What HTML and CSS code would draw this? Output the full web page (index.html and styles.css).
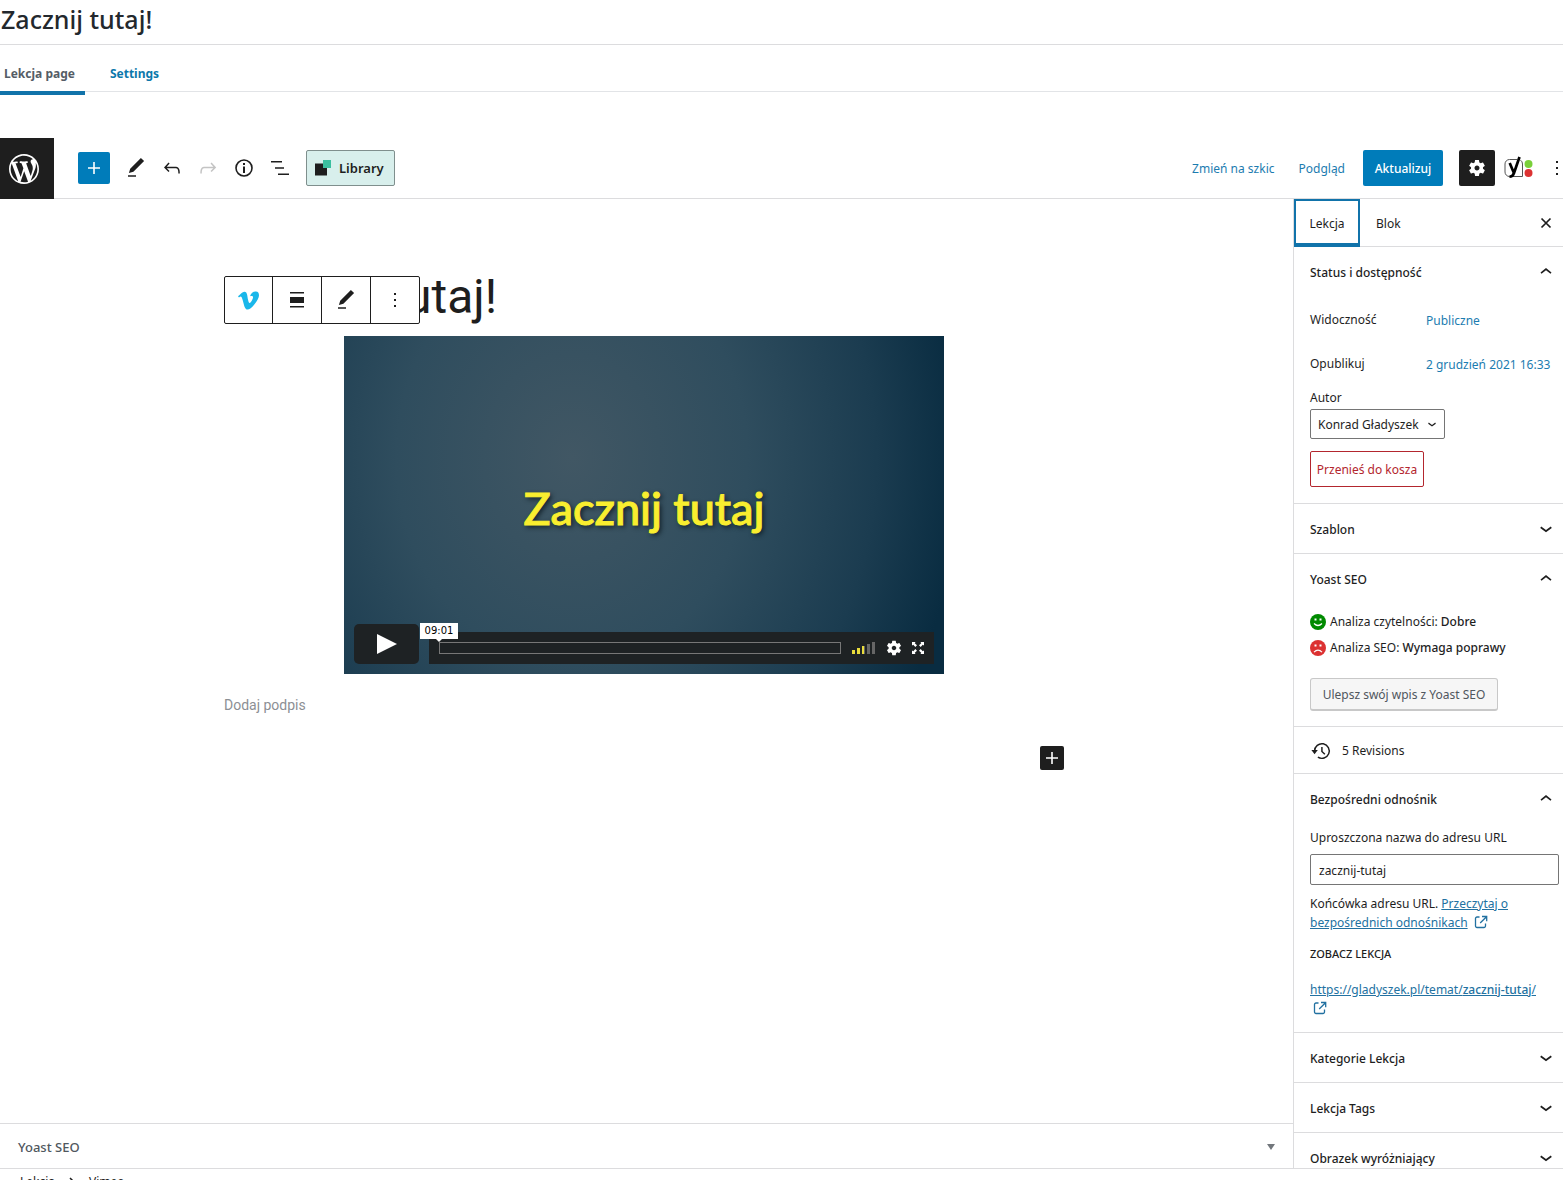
FILE: index.html
```html
<!DOCTYPE html>
<html lang="pl">
<head>
<meta charset="utf-8">
<title>Zacznij tutaj!</title>
<link rel="stylesheet" href="styles.css">
</head>
<body>
<svg class="sprite" aria-hidden="true">
  <symbol id="i-pencil" viewBox="0 0 24 24"><path d="M20.1 5.1L16.9 2 6.2 12.7l-1.3 4.4 4.5-1.3L20.1 5.1zM4 20.8h8v-1.5H4v1.5z"/></symbol>
  <symbol id="i-plus" viewBox="0 0 24 24"><path d="M18 11.2h-5.2V6h-1.6v5.2H6v1.6h5.2V18h1.6v-5.2H18z"/></symbol>
  <symbol id="i-dots" viewBox="0 0 24 24"><path d="M11 5h2v2h-2zM11 11h2v2h-2zM11 17h2v2h-2z"/></symbol>
  <symbol id="i-down" viewBox="0 0 24 24"><path d="M17.8 10L12 14.200 6.200 10l1-1.600L12 12l4.800-3.600 1 1.600z"/></symbol>
  <symbol id="i-up" viewBox="0 0 24 24"><path d="M6.500 11.400L12 7l5.500 4.400-1 1.300L12 9.200l-4.500 3.500-1-1.300z"/></symbol>
  <symbol id="i-cog" viewBox="0 0 24 24"><path d="M19.14 12.94c.04-.3.06-.61.06-.94 0-.32-.02-.64-.07-.94l2.03-1.58c.18-.14.23-.41.12-.61l-1.92-3.32c-.12-.22-.37-.29-.59-.22l-2.39.96c-.5-.38-1.03-.7-1.62-.94l-.36-2.54c-.04-.24-.24-.41-.48-.41h-3.84c-.24 0-.43.17-.47.41l-.36 2.54c-.59.24-1.13.57-1.62.94l-2.39-.96c-.22-.08-.47 0-.59.22L2.74 8.87c-.12.21-.08.47.12.61l2.03 1.58c-.05.3-.09.63-.09.94s.02.64.07.94l-2.03 1.58c-.18.14-.23.41-.12.61l1.92 3.32c.12.22.37.29.59.22l2.39-.96c.5.38 1.03.7 1.62.94l.36 2.54c.05.24.24.41.48.41h3.84c.24 0 .44-.17.47-.41l.36-2.54c.59-.24 1.13-.56 1.62-.94l2.39.96c.22.08.47 0 .59-.22l1.92-3.32c.12-.22.07-.47-.12-.61l-2.01-1.58zM12 15c-1.7 0-3-1.3-3-3s1.3-3 3-3 3 1.3 3 3-1.3 3-3 3z"/></symbol>
  <symbol id="i-external" viewBox="0 0 14 14"><path fill="none" stroke="currentColor" stroke-width="1.3" d="M5.500 2H3a1.500 1.500 0 0 0-1.500 1.500V11A1.500 1.500 0 0 0 3 12.500h7a1.500 1.500 0 0 0 1.500-1.500V8.500M8 1.500h4.700v4.700M12.500 1.700L6.200 8"/></symbol>
</svg>

<header class="page-head"><h1>Zacznij tutaj!</h1></header>
<nav class="page-tabs">
  <a href="#lekcja" class="page-tab is-active">Lekcja page</a>
  <a href="#settings" class="page-tab">Settings</a>
</nav>

<div class="editor">
  <div class="topbar">
    <a href="#wp" class="wp-logo" aria-label="WordPress">
      <svg viewBox="-2 -2 24 24"><path d="M20 10c0-5.51-4.49-10-10-10C4.480 0 0 4.490 0 10c0 5.520 4.480 10 10 10 5.510 0 10-4.480 10-10zM7.780 15.370L4.370 6.220c.55-.02 1.170-.08 1.170-.08.5-.06.44-1.130-.06-1.110 0 0-1.450.11-2.370.11-.18 0-.37 0-.58-.01C4.120 2.690 6.870 1.110 10 1.110c2.330 0 4.450.87 6.050 2.340-.68-.11-1.650.39-1.650 1.580 0 .74.45 1.360.9 2.100.35.61.55 1.360.55 2.460 0 1.490-1.400 5-1.400 5l-3.030-8.370c.54-.02.82-.17.82-.17.5-.05.44-1.250-.06-1.220 0 0-1.440.12-2.380.12-.87 0-2.330-.12-2.330-.12-.5-.03-.56 1.200-.06 1.220l.92.08 1.260 3.410zM17.410 10c.24-.64.74-1.870.43-4.250.7 1.290 1.050 2.710 1.050 4.250 0 3.290-1.730 6.240-4.400 7.780.97-2.590 1.940-5.200 2.920-7.780zM6.100 18.090C3.120 16.650 1.110 13.530 1.110 10c0-1.300.23-2.480.72-3.590C3.250 10.300 4.670 14.200 6.100 18.090zm4.030-6.630l2.580 6.980c-.86.29-1.760.45-2.710.45-.79 0-1.570-.11-2.290-.33.81-2.380 1.620-4.740 2.420-7.100z"/></svg>
    </a>
    <div class="tools">
      <button class="add-block" aria-label="Dodaj blok"><svg><use href="#i-plus"/></svg></button>
      <button class="tool" aria-label="Edytuj"><svg><use href="#i-pencil"/></svg></button>
      <button class="tool" aria-label="Cofnij"><svg viewBox="0 0 24 24"><path d="M18.300 11.700c-.6-.6-1.400-.9-2.300-.9H6.700l2.900-3.300-1.100-1-4.500 5L8.500 16l1-1-2.700-2.700H16c.5 0 .9.2 1.300.5 1 1 1 3.400 1 4.500v.3h1.500v-.2c0-1.500 0-4.300-1.500-5.700z"/></svg></button>
      <button class="tool is-muted" aria-label="Ponów" disabled><svg viewBox="0 0 24 24"><path d="M15.600 6.500l-1.100 1 2.900 3.300H8c-.9 0-1.700.3-2.300.9-1.400 1.500-1.400 4.200-1.400 5.600v.2h1.500v-.3c0-1.100 0-3.500 1-4.500.3-.3.7-.5 1.300-.5h9.200L14.500 15l1.100 1.100 4.600-4.600-4.600-5z"/></svg></button>
      <button class="tool" aria-label="Szczegóły"><svg viewBox="0 0 24 24"><circle cx="12" cy="12" r="8" fill="none" stroke="currentColor" stroke-width="1.600"/><path d="M11 7h2v2h-2zM11 10.500h2V17h-2z"/></svg></button>
      <button class="tool" aria-label="Widok listy"><svg viewBox="0 0 24 24"><path d="M3 5h11v1.500H3zM7 11.300h9v1.500H7zM10 17.500h11V19H10z"/></svg></button>
      <button class="library"><svg viewBox="0 0 16 16"><path d="M0 3.500h12v12H0z"/><path fill="#3bbf9f" d="M8 0h8v8H8z"/></svg>Library</button>
    </div>
    <div class="actions">
      <button class="link-btn">Zmień na szkic</button>
      <button class="link-btn">Podgląd</button>
      <button class="update">Aktualizuj</button>
      <button class="cog" aria-label="Ustawienia"><svg><use href="#i-cog"/></svg></button>
      <button class="yoast-btn" aria-label="Yoast SEO"><svg viewBox="0 0 30 24"><path fill="none" stroke="#555" d="M13 3.500H5.500A4.500 4.500 0 0 0 1 8v8a4.500 4.500 0 0 0 4.500 4.500H18.500V8a4.500 4.500 0 0 0-2-3.800"/><path fill="none" stroke="#000" stroke-width="2.700" d="M15.500 1L10 17q-1.300 3.700-4.500 3.700M5.700 7l4 9.500"/><circle cx="24.500" cy="8" r="4" fill="#7ad03a"/><circle cx="24.500" cy="17" r="4" fill="#dc3232"/></svg></button>
      <button class="more" aria-label="Opcje"><svg><use href="#i-dots"/></svg></button>
    </div>
  </div>

  <div class="body">
    <div class="main">
      <main class="canvas">
        <div class="column">
          <h2 class="post-title">Zacznij tutaj!</h2>
          <div class="block-toolbar">
            <button aria-label="Vimeo"><svg class="vimeo" viewBox="0 0 24 24"><path d="M23.980 6.420c-.1 2.340-1.740 5.540-4.900 9.600-3.260 4.250-6.020 6.380-8.290 6.380-1.400 0-2.570-1.300-3.550-3.880L5.320 11.400C4.600 8.820 3.840 7.520 3.010 7.520c-.18 0-.8.380-1.880 1.130L0 7.200a315 315 0 0 0 3.500-3.130C5.080 2.700 6.270 1.980 7.060 1.910c1.860-.18 3.010 1.100 3.440 3.840.47 2.950.8 4.790.97 5.500.54 2.450 1.130 3.680 1.780 3.680.5 0 1.260-.8 2.260-2.390 1-1.590 1.540-2.800 1.620-3.620.14-1.380-.4-2.070-1.620-2.070-.57 0-1.160.13-1.780.4 1.190-3.870 3.440-5.760 6.770-5.640 2.470.06 3.620 1.660 3.480 4.810z"/></svg></button>
            <button aria-label="Wyrównanie"><svg viewBox="0 0 24 24"><path d="M5 4h14v1.500H5zM5 9h14v6H5zM5 18h14v1.500H5z"/></svg></button>
            <button aria-label="Edytuj adres"><svg><use href="#i-pencil"/></svg></button>
            <button aria-label="Więcej"><svg><use href="#i-dots"/></svg></button>
          </div>
          <figure class="video">
            <div class="slide">Zacznij tutaj</div>
            <div class="player">
              <button class="play" aria-label="Odtwórz"><svg viewBox="0 0 20 20"><path d="M0 0l20 10L0 20z"/></svg></button>
              <div class="controls">
                <div class="track"><span class="time">09:01</span></div>
                <svg class="volume" viewBox="0 0 23 12"><path fill="#e8dc3c" d="M0 8h3v4H0zM5 6h3v6H5zM10 4h2v8h-2z"/><path fill="#666" d="M12 4h1v8h-1zM15 2h3v10h-3zM20 0h3v12h-3z"/></svg>
                <svg class="gear"><use href="#i-cog"/></svg>
                <svg class="full" viewBox="0 0 12 12"><path d="M0 0h3.500l-.7 1.300L5 3.300 3.300 5l-2-2.200L0 3.500zM12 0v3.500l-1.300-.7-2 2.200L7 3.300l2.200-2L8.500 0zM0 12V8.500l1.300.7 2-2.200L5 8.700l-2.200 2 .7 1.300zM12 12H8.500l.7-1.300-2.200-2L8.700 7l2 2.200 1.300-.7z"/></svg>
              </div>
            </div>
          </figure>
          <p class="caption">Dodaj podpis</p>
          <div class="appender"><button aria-label="Dodaj blok"><svg><use href="#i-plus"/></svg></button></div>
        </div>
      </main>
      <button class="metabox">Yoast SEO<svg viewBox="0 0 8 6"><path d="M0 0h8L4 6z"/></svg></button>
    </div>

    <aside class="sidebar">
      <div class="side-tabs">
        <button class="side-tab is-active">Lekcja</button>
        <button class="side-tab">Blok</button>
        <button class="close" aria-label="Zamknij"><svg viewBox="0 0 12 12"><path fill="none" stroke="currentColor" stroke-width="1.700" d="M1.500 1.500l9 9M10.500 1.500l-9 9"/></svg></button>
      </div>

      <section class="panel">
        <button class="panel-head is-open">Status i dostępność<svg><use href="#i-up"/></svg></button>
        <div class="panel-body status">
          <div class="row"><span>Widoczność</span><button class="link-btn">Publiczne</button></div>
          <div class="row"><span>Opublikuj</span><button class="link-btn">2 grudzień 2021 16:33</button></div>
          <label class="author-label" for="author">Autor</label>
          <div class="select"><select id="author"><option>Konrad Gładyszek</option></select><svg><use href="#i-down"/></svg></div>
          <button class="trash">Przenieś do kosza</button>
        </div>
      </section>

      <section class="panel"><button class="panel-head">Szablon<svg><use href="#i-down"/></svg></button></section>

      <section class="panel">
        <button class="panel-head is-open">Yoast SEO<svg><use href="#i-up"/></svg></button>
        <div class="panel-body yoast">
          <p><svg viewBox="0 0 16 16"><circle cx="8" cy="8" r="8" fill="#008a00"/><path fill="#fff" d="M4.500 4.500h2v2h-2zM9.500 4.500h2v2h-2z"/><path fill="none" stroke="#fff" stroke-width="1.200" d="M4 9.500q4 4 8 0"/></svg>Analiza czytelności: <b>Dobre</b></p>
          <p><svg viewBox="0 0 16 16"><circle cx="8" cy="8" r="8" fill="#dc3232"/><path fill="#fff" d="M4.500 4.500h2v2h-2zM9.500 4.500h2v2h-2z"/><path fill="none" stroke="#fff" stroke-width="1.200" d="M4 12.200q4-4 8 0"/></svg>Analiza SEO: <b>Wymaga poprawy</b></p>
          <button class="improve">Ulepsz swój wpis z Yoast SEO</button>
        </div>
      </section>

      <section class="panel">
        <button class="revisions"><svg viewBox="0 0 24 24"><path fill="none" stroke="currentColor" stroke-width="1.600" d="M5 12a8 8 0 1 1 3.600 6.700M13 7.500V12.500l3.200 3"/><path d="M1.500 11h7L5 15.500z"/></svg>5 Revisions</button>
      </section>

      <section class="panel">
        <button class="panel-head is-open">Bezpośredni odnośnik<svg><use href="#i-up"/></svg></button>
        <div class="panel-body permalink">
          <label for="slug">Uproszczona nazwa do adresu URL</label>
          <input id="slug" type="text" value="zacznij-tutaj">
          <p>Końcówka adresu URL. <a href="#help">Przeczytaj o bezpośrednich odnośnikach</a> <svg><use href="#i-external"/></svg></p>
          <h3>ZOBACZ LEKCJA</h3>
          <p><a href="#view">https://gladyszek.pl/temat/<b>zacznij-tutaj</b>/</a><br><svg><use href="#i-external"/></svg></p>
        </div>
      </section>

      <section class="panel"><button class="panel-head">Kategorie Lekcja<svg><use href="#i-down"/></svg></button></section>
      <section class="panel"><button class="panel-head">Lekcja Tags<svg><use href="#i-down"/></svg></button></section>
      <section class="panel"><button class="panel-head">Obrazek wyróżniający<svg><use href="#i-down"/></svg></button></section>
    </aside>
  </div>

  <footer class="breadcrumb"><span>Lekcja</span><svg viewBox="0 0 6 10"><path fill="none" stroke="currentColor" stroke-width="1.500" d="M1 1l4 4-4 4"/></svg><span>Vimeo</span></footer>
</div>
</body>
</html>
```
FILE: styles.css
```css
* { box-sizing: border-box; }

body {
  margin: 0;
  height: 100vh;
  display: flex;
  flex-direction: column;
  overflow: hidden;
  background: #fff;
  color: #1e1e1e;
  font: 12px/18px "Noto Sans", "Open Sans", sans-serif;
}

h1, h2, h3, p, figure { margin: 0; }
b { font-weight: 500; }
a { color: #2271a1; }
svg { display: block; flex: none; width: 24px; height: 24px; fill: currentColor; }
button, input, select { font: inherit; color: inherit; }
button {
  display: flex;
  align-items: center;
  justify-content: center;
  padding: 0;
  border: 0;
  background: none;
  white-space: nowrap;
}
.sprite { position: absolute; width: 0; height: 0; }

.page-head { flex: none; padding: 0 1px; border-bottom: 1px solid #dcdcde; }
.page-head h1 { font-size: 25px; line-height: 38px; font-weight: 500; color: #23282d; padding-bottom: 6px; }

.page-tabs { flex: none; display: flex; gap: 21px; height: 47px; border-bottom: 1px solid #e2e4e7; }
.page-tab { height: 50px; padding: 0 4px; line-height: 58px; font-weight: 700; color: #0b78ab; text-decoration: none; }
.page-tab.is-active { padding-right: 10px; color: #555d66; border-bottom: 4px solid #1173aa; }

.editor { flex: 1; min-height: 0; margin: 46px 0 -14px; display: flex; flex-direction: column; }

.topbar { flex: none; display: flex; align-items: center; height: 61px; border-bottom: 1px solid #dcdcde; }
.wp-logo { display: flex; align-items: center; width: 54px; height: 61px; padding: 2px 0 0 6px; background: #1e1e1e; color: #fff; }
.wp-logo svg { width: 36px; height: 36px; }
.tools { display: flex; align-items: center; padding-left: 24px; }
.add-block { width: 32px; height: 32px; margin-right: 8px; border-radius: 2px; background: #007cba; color: #fff; }
.tool { width: 36px; height: 36px; }
.tool.is-muted { color: #c4c4c4; }
.library {
  gap: 8px;
  height: 36px;
  margin-left: 8px;
  padding: 0 10px 0 8px;
  border: 1px solid #7f8f8d;
  border-radius: 2px;
  background: #d8efec;
  font-size: 13px;
  font-weight: 600;
}
.library svg { width: 16px; height: 16px; }
.actions { display: flex; align-items: center; margin-left: auto; }
.link-btn { padding-top: 2px; color: #1c7cb0; }
.actions .link-btn { margin-right: 24px; }
.actions .link-btn + .link-btn { margin-right: 18px; }
.update { width: 80px; height: 36px; margin-right: 16px; padding-top: 2px; border-radius: 2px; background: #007cba; color: #fff; font-weight: 500; }
.cog { width: 36px; height: 36px; border-radius: 2px; background: #1e1e1e; color: #fff; }
.cog svg { width: 20px; height: 20px; }
.yoast-btn { margin: 0 16px 0 9px; }
.yoast-btn svg { width: 30px; height: 24px; }
.more { width: 13px; height: 36px; }

.body { flex: 1; min-height: 0; display: flex; border-bottom: 1px solid #dcdcde; }
.main { flex: 1; min-width: 0; display: flex; flex-direction: column; }
.canvas { flex: 1; min-height: 0; padding: 66px 5px 0 0; }
.column { position: relative; max-width: 840px; margin: 0 auto; }
.post-title { font: 400 48px/64px Roboto, sans-serif; }

.block-toolbar {
  position: absolute;
  left: 0;
  top: 11px;
  display: flex;
  height: 48px;
  background: #fff;
  border: 1px solid #1e1e1e;
  border-radius: 2px;
}
.block-toolbar button { width: 49px; }
.block-toolbar button:first-child { width: 47px; }
.block-toolbar button + button { border-left: 1px solid #1e1e1e; }
.block-toolbar .vimeo { width: 21px; height: 21px; color: #1ab7ea; }

.video {
  display: flex;
  flex-direction: column;
  max-width: 600px;
  height: 338px;
  margin: 7px auto 0;
  padding: 10px;
  background: radial-gradient(ellipse 390px 460px at 38% 36%, #415764 0%, #2f4d5e 45%, #1b3c50 78%, #092c41 100%);
}
.slide {
  flex: 1;
  padding-top: 46px;
  display: flex;
  align-items: center;
  justify-content: center;
  font: 500 45px/56px Lato, sans-serif;
  color: #f9ee2f;
  -webkit-text-stroke: 1px #f9ee2f;
  text-shadow: 2px 2px 5px #0d1a22;
}
.player { display: flex; align-items: flex-end; gap: 10px; }
.play { width: 65px; height: 40px; border-radius: 5px; background: #1e2224; color: #fff; }
.play svg { width: 20px; height: 20px; }
.controls { flex: 1; display: flex; align-items: center; height: 32px; padding: 0 10px; background: #1e2224; color: #fff; }
.track { position: relative; flex: 1; height: 12px; margin-right: 11px; border: 1px solid #777; }
.time {
  position: absolute;
  left: -20px;
  top: -20px;
  width: 38px;
  background: #fff;
  color: #000;
  font: 10px/16px "DejaVu Sans", sans-serif;
  text-align: center;
}
.time::after {
  content: "";
  position: absolute;
  left: 16px;
  top: 16px;
  border: 3px solid transparent;
  border-top-color: #fff;
}
.volume { width: 23px; height: 12px; }
.gear { width: 18px; height: 18px; margin: 0 9px 0 10px; }
.full { width: 12px; height: 12px; }

.caption { padding-top: 22px; font: 14px/18px Roboto, sans-serif; color: #8c8f94; }
.appender { display: flex; justify-content: flex-end; padding-top: 32px; }
.appender button { width: 24px; height: 24px; border-radius: 2px; background: #1e1e1e; color: #fff; }

.metabox {
  flex: none;
  justify-content: space-between;
  height: 45px;
  padding: 2px 18px 0;
  border-top: 1px solid #dcdcde;
  font-size: 13px;
  font-weight: 500;
  color: #50575e;
}
.metabox svg { width: 8px; height: 6px; color: #72777c; }

.sidebar { flex: none; width: 270px; border-left: 1px solid #dcdcde; overflow: hidden; }
.side-tabs { display: flex; height: 48px; border-bottom: 1px solid #dcdcde; }
.side-tab { padding: 2px 16px 0; }
.side-tab.is-active { width: 66px; padding: 4px 0 0; border: 2px solid #1173aa; border-bottom-width: 4px; height: 48px; }
.close { margin: 0 11px 0 auto; }
.close svg { width: 12px; height: 12px; }

.panel { border-bottom: 1px solid #dcdcde; }
.panel-head {
  justify-content: space-between;
  width: 100%;
  height: 49px;
  padding: 2px 5px 0 16px;
  font-weight: 500;
}
.panel-head.is-open { height: 50px; }
.panel-body { padding: 0 4px 16px 16px; }

.status { padding-top: 5px; }
.row { display: flex; align-items: center; height: 36px; margin-bottom: 8px; }
.row span { width: 116px; }
.author-label { display: block; margin-top: -1px; padding-bottom: 2px; }
.select { position: relative; width: 135px; }
.select select {
  display: block;
  width: 100%;
  height: 30px;
  padding: 2px 7px 0;
  border: 1px solid #757575;
  border-radius: 2px;
  background: #fff;
  appearance: none;
}
.select svg { position: absolute; right: 5px; top: 8px; width: 16px; height: 16px; pointer-events: none; }
.trash { width: 114px; height: 36px; margin-top: 12px; padding-top: 2px; border: 1px solid #b3262e; border-radius: 2px; color: #b3262e; }

.yoast { padding-top: 5px; padding-bottom: 15px; }
.yoast p { display: flex; align-items: center; height: 26px; white-space: pre; }
.yoast svg { width: 16px; height: 16px; margin-right: 4px; }
.improve {
  width: 188px;
  height: 33px;
  margin-top: 17px;
  padding-top: 2px;
  border: 1px solid #c8c8c8;
  border-bottom-width: 2px;
  border-radius: 3px;
  background: #f6f6f6;
  color: #50575e;
}

.revisions { width: 100%; height: 46px; justify-content: flex-start; gap: 10px; padding: 2px 0 0 16px; }
.revisions svg { width: 22px; height: 22px; }

.permalink { padding-top: 5px; }
.permalink label { display: block; }
.permalink input {
  display: block;
  width: 100%;
  height: 31px;
  margin: 7px 0 9px;
  padding: 2px 8px 0;
  border: 1px solid #757575;
  border-radius: 2px;
}
.permalink p { line-height: 19px; }
.permalink p svg { display: inline-block; width: 14px; height: 14px; margin: 0 3px; vertical-align: -2px; color: #2271a1; }
.permalink h3 { margin: 13px 0 17px; font-size: 11px; line-height: 18px; font-weight: 500; }
.permalink { padding-bottom: 14px; }

.breadcrumb { flex: none; display: flex; align-items: center; gap: 14px; height: 25px; padding-left: 20px; }
.breadcrumb svg { width: 6px; height: 10px; }
```
